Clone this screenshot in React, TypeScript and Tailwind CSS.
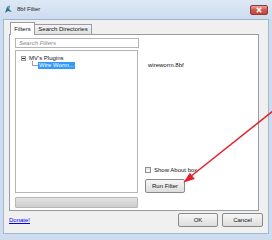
import React from "react";

const font = "font-['Liberation_Sans',Arial,sans-serif]";

function TitleIcon() {
  return (
    <svg width="9" height="9" viewBox="0 0 9 9">
      <path d="M1 8 L3 2 L6 0.5 L5 4 L8 7 L4 6 Z" fill="#2d6f86" />
      <path d="M3 2 L6 0.5 L5 4 Z" fill="#5fa8c0" />
    </svg>
  );
}

function CloseButton() {
  return (
    <div className="flex h-[10px] w-[18px] items-center justify-center rounded-[2px] border border-[#8e3a3a] bg-gradient-to-b from-[#e8a39c] via-[#d0564c] to-[#c8473d]">
      <svg width="6" height="6" viewBox="0 0 6 6">
        <path d="M0.8 0.8 L5.2 5.2 M5.2 0.8 L0.8 5.2" stroke="#ffffff" strokeWidth="1.6" />
      </svg>
    </div>
  );
}

function WinButton({ label, className }: { label: string; className?: string }) {
  return (
    <div
      className={`flex h-[14px] items-center justify-center rounded-[2px] border border-[#8a8a8a] bg-gradient-to-b from-[#f6f6f6] to-[#dddddd] text-[6px] text-[#111] ${className ?? ""}`}
    >
      {label}
    </div>
  );
}

function Tree() {
  return (
    <div className="relative mt-[2px] h-[143px] w-[123px] border border-[#b5b5b5] bg-white">
      <div className="flex items-center pl-[5px] pt-[4px]">
        <div className="flex h-[5px] w-[5px] items-center justify-center border border-[#9a9a9a] bg-[#eeeeee]">
          <div className="h-[1px] w-[3px] bg-[#333]" />
        </div>
        <span className="ml-[3px] text-[6px] leading-[6px] text-[#111]">MV's Plugins</span>
      </div>
      <div className="flex items-end pl-[16px]">
        <div className="mb-[3px] h-[5px] w-[6px] border-b border-l border-[#a0a0a0]" />
        <span className="bg-[#3399ff] px-[1px] text-[6px] leading-[7px] text-white">Wire Worm...</span>
      </div>
    </div>
  );
}

function Arrow() {
  return (
    <svg className="pointer-events-none absolute left-0 top-0" width="272" height="240" viewBox="0 0 272 240">
      <line x1="273" y1="111" x2="190" y2="177" stroke="#e2222a" strokeWidth="1.5" />
      <polygon points="183.5,182.5 194.8,178.9 189.8,172.7" fill="#e2222a" />
    </svg>
  );
}

export default function App() {
  return (
    <div className={`relative flex h-[240px] w-[272px] flex-col overflow-hidden bg-[#cddcee] ${font}`}>
      <div className="flex h-[19px] items-center bg-gradient-to-b from-[#dde8f5] to-[#cddcee] pl-[4px] pr-[4px]">
        <TitleIcon />
        <span className="ml-[4px] text-[6px] text-[#1e1e1e]">8bf Filter</span>
        <div className="ml-auto">
          <CloseButton />
        </div>
      </div>

      <div className="mx-[3px] mb-[6px] flex flex-1 flex-col border border-[#9fb5d0] bg-[#f0f0f0] pl-[5px] pt-[2px]">
        <div className="flex h-[12px] items-end pl-[1px]">
          <div className="relative z-10 -mb-[1px] flex h-[13px] w-[25px] items-center justify-center border border-b-0 border-[#9a9ca3] bg-white text-[6px] text-[#111]">
            Filters
          </div>
          <div className="flex h-[10px] w-[57px] items-center justify-center border border-l-0 border-b-0 border-[#9a9ca3] bg-gradient-to-b from-[#f4f4f4] to-[#e1e1e1] text-[6px] text-[#111]">
            Search Directories
          </div>
        </div>

        <div className="flex h-[177px] w-[250px] border border-[#9a9ca3] bg-white pl-[5px] pt-[3px]">
          <div className="flex w-[124px] flex-col">
            <div className="flex h-[10px] items-center border border-[#b5b5b5] bg-white pl-[3px] text-[6px] italic text-[#8a8a8a]">
              Search Filters
            </div>
            <Tree />
            <div className="mt-[4px] h-[11px] w-[123px] rounded-[1px] border border-[#b8b8b8] bg-gradient-to-b from-[#e2e2e2] to-[#cfcfcf]" />
          </div>

          <div className="ml-[6px] flex flex-col">
            <span className="ml-[3px] mt-[24px] text-[6px] leading-[7px] text-[#111]">wireworm.8bf</span>
            <div className="mt-[98px] flex items-center">
              <div className="h-[6px] w-[6px] border border-[#8f8f8f] bg-gradient-to-b from-[#e4e4e4] to-[#f8f8f8]" />
              <span className="ml-[3px] text-[6px] leading-[6px] text-[#111]">Show About box</span>
            </div>
            <WinButton label="Run Filter" className="mt-[6px] w-[40px]" />
          </div>
        </div>

        <div className="mt-[2px] flex items-center">
          <span className="text-[6px] text-[#0000ee] underline">Donate!</span>
          <WinButton label="OK" className="ml-auto w-[40px]" />
          <WinButton label="Cancel" className="ml-[4px] mr-[5px] w-[41px]" />
        </div>
      </div>
      <Arrow />
    </div>
  );
}
